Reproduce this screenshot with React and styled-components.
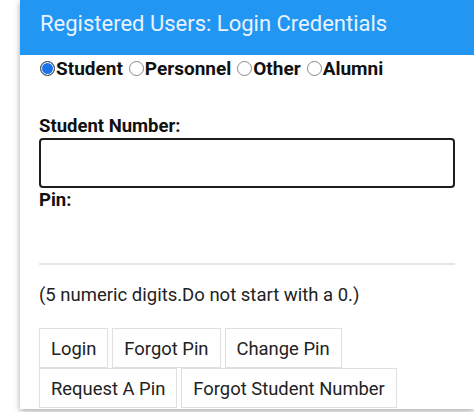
import React from "react";
import styled, { createGlobalStyle } from "styled-components";

const GlobalStyle = createGlobalStyle`
body{
margin:0;
background:#fff;
font-family:Roboto, "Liberation Sans", sans-serif;
overflow:hidden;
}
`;

const Page = styled.div`
width:474px;
height:412px;
padding-left:20px;
box-sizing:border-box;
overflow:hidden;
`;

const Card = styled.div`
width:454px;
height:409px;
background:#fff;
box-shadow:0 2px 6px rgba(0,0,0,0.35);
`;

const Header = styled.div`
height:55px;
background:#2196f3;
color:#e8f3fe;
font-size:22px;
line-height:26px;
padding:11px 0 0 20px;
box-sizing:border-box;
`;

const Body = styled.div`
padding:0 19px 0 19px;
`;

const RadioRow = styled.div`
display:flex;
align-items:center;
gap:5px;
height:26px;
font-weight:bold;
font-size:19px;
color:#111;
`;

const RadioItem = styled.label`
display:flex;
align-items:center;
`;

const RadioDot = styled.span`
width:15px;
height:15px;
border-radius:50%;
box-sizing:border-box;
margin:0 1px 0 1px;
border:1px solid ${p => (p.$on ? "#444" : "#888")};
background:${p => (p.$on ? "#1a73e8" : "#fff")};
box-shadow:${p => (p.$on ? "inset 0 0 0 1px #fff" : "none")};
`;

const FieldLabel = styled.div`
font-weight:bold;
font-size:18.5px;
color:#111;
margin-top:${p => p.$top}px;
line-height:20px;
`;

const TextBox = styled.div`
height:50px;
margin-top:${p => p.$top}px;
border:2px solid #1e1e1e;
border-radius:4px;
box-sizing:border-box;
`;

const PinBox = styled.div`
height:55px;
box-sizing:border-box;
border-bottom:2px solid #e6e6e6;
`;

const Hint = styled.div`
font-size:18.5px;
color:#222;
margin-top:19px;
line-height:22px;
`;

const ButtonGrid = styled.div`
display:flex;
flex-wrap:wrap;
column-gap:4px;
margin-top:22px;
width:410px;
`;

const Btn = styled.div`
height:40px;
padding:0 11px;
border:1px solid #e0e0e0;
box-sizing:border-box;
display:flex;
align-items:center;
font-size:18.4px;
color:#222;
background:#fff;
`;

const Break = styled.div`
flex-basis:100%;
height:0;
`;

const App = () => {
  const roles = ["Student", "Personnel", "Other", "Alumni"];
  return (
    <Page>
      <GlobalStyle />
      <Card>
        <Header>Registered Users: Login Credentials</Header>
        <Body>
          {/* user type */}
          <RadioRow>
            {roles.map((r, i) => (
              <RadioItem key={r}>
                <RadioDot $on={i === 0} />
                {r}
              </RadioItem>
            ))}
          </RadioRow>

          <FieldLabel $top={35}>Student Number:</FieldLabel>
          <TextBox $top={2} />
          <FieldLabel $top={2}>Pin:</FieldLabel>
          <PinBox />

          <Hint>(5 numeric digits.Do not start with a 0.)</Hint>

          {/* actions */}
          <ButtonGrid>
            <Btn>Login</Btn>
            <Btn>Forgot Pin</Btn>
            <Btn>Change Pin</Btn>
            <Break />
            <Btn>Request A Pin</Btn>
            <Btn>Forgot Student Number</Btn>
          </ButtonGrid>
        </Body>
      </Card>
    </Page>
  );
};

export default App;
